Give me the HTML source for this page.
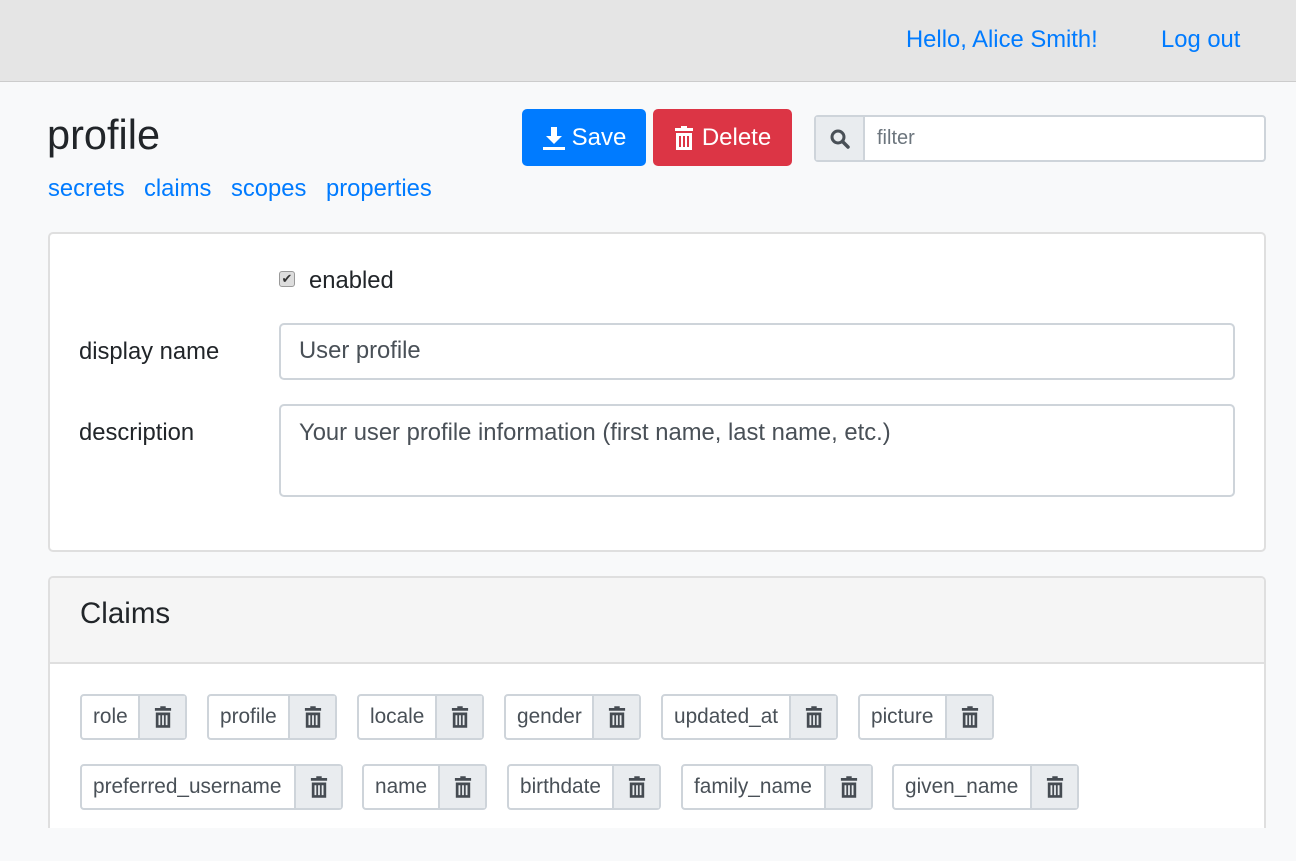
<!DOCTYPE html><html><head><style>
*{box-sizing:border-box;margin:0;padding:0}
body{width:1296px;height:861px;background:#f8f9fa;font-family:"Liberation Sans",sans-serif;position:relative;overflow:hidden;color:#212529}
.a{position:absolute}
.hdr{left:0;top:0;width:1296px;height:82px;background:#e5e5e5;border-bottom:1px solid #ccc}
.lnk{color:#007bff;font-size:23.8px}
.chip{position:absolute;height:46px;border:2px solid #ced4da;border-radius:4px;background:#fff;display:flex;font-size:20.8px;color:#495057}
.chip span{flex:1;display:flex;align-items:center;padding-left:11px}
.chip i{width:47px;background:#e9ecef;border-left:2px solid #ced4da;display:flex;align-items:center;justify-content:center}
</style></head><body>
<div class="a hdr"></div>
<div class="a lnk" style="left:906px;top:26px">Hello, Alice Smith!</div>
<div class="a lnk" style="left:1161px;top:26px">Log out</div>
<div class="a" style="left:47px;top:111px;font-size:41.5px">profile</div>
<div class="a lnk" style="left:48px;top:175px">secrets</div>
<div class="a lnk" style="left:144px;top:175px">claims</div>
<div class="a lnk" style="left:231px;top:175px">scopes</div>
<div class="a lnk" style="left:326px;top:175px">properties</div>
<div class="a" style="left:522px;top:109px;width:124px;height:57px;background:#007bff;border-radius:5px;color:#fff;font-size:24px;display:flex;align-items:center;justify-content:center;gap:6px"><svg width="24" height="24" viewBox="0 0 24 24"><path d="M9 1h6v9h5l-8 8-8-8h5z M1 21h22v3H1z" fill="#fff"/></svg>Save</div>
<div class="a" style="left:653px;top:109px;width:139px;height:57px;background:#dc3545;border-radius:5px;color:#fff;font-size:24px;display:flex;align-items:center;justify-content:center;gap:8px"><svg width="20" height="24" viewBox="0 0 20 24"><path d="M7 0h6v2h6v3H1V2h6z M2 7h16v17H2z" fill="#fff"/><path d="M6 10v11M10 10v11M14 10v11" stroke="#dc3545" stroke-width="2"/></svg>Delete</div>
<div class="a" style="left:814px;top:115px;width:452px;height:47px;border:2px solid #ced4da;border-radius:4px;background:#fff;display:flex">
<div style="width:49px;background:#e9ecef;border-right:2px solid #ced4da;display:flex;align-items:center;justify-content:center"><svg width="20" height="20" viewBox="0 0 20 20"><circle cx="8" cy="8" r="6" fill="none" stroke="#495057" stroke-width="3"/><path d="M12.5 12.5L18 18" stroke="#495057" stroke-width="3.5" stroke-linecap="round"/></svg></div>
<div style="padding-left:12px;font-size:20px;color:#6c757d;display:flex;align-items:center">filter</div></div>
<div class="a" style="left:48px;top:232px;width:1218px;height:320px;background:#fff;border:2px solid #dfdfdf;border-radius:5px"></div>
<div class="a" style="left:279px;top:271px;width:16px;height:16px;border:1px solid #999;border-radius:3px;background:#ddd;font-size:13px;line-height:14px;text-align:center;color:#333">✔</div>
<div class="a" style="left:309px;top:267px;font-size:23.8px">enabled</div>
<div class="a" style="left:79px;top:338px;font-size:23.8px">display name</div>
<div class="a" style="left:279px;top:323px;width:956px;height:57px;border:2px solid #ced4da;border-radius:5px;font-size:23.8px;color:#495057;padding:12px 18px">User profile</div>
<div class="a" style="left:79px;top:419px;font-size:23.8px">description</div>
<div class="a" style="left:279px;top:404px;width:956px;height:93px;border:2px solid #ced4da;border-radius:5px;font-size:23.8px;color:#495057;padding:13px 18px">Your user profile information (first name, last name, etc.)</div>
<div class="a" style="left:48px;top:576px;width:1218px;height:270px;background:#fff;border:2px solid #dfdfdf;border-radius:5px;overflow:hidden"><div style="height:86px;background:#f5f5f5;border-bottom:2px solid #dfdfdf;font-size:29.5px;padding:19px 30px">Claims</div></div>
<div class="a" style="left:0;top:828px;width:1296px;height:33px;background:#f8f9fa"></div>
<div id="chips"></div>
<script>
var t='<svg width="18" height="22" viewBox="0 0 20 24"><path d="M7 0h6v2h6v3H1V2h6z M2 7h16v17H2z" fill="#454b52"/><path d="M6 10v11M10 10v11M14 10v11" stroke="#e9ecef" stroke-width="2"/></svg>';
var c=[["role",80,694,107],["profile",207,694,130],["locale",357,694,127],["gender",504,694,137],["updated_at",661,694,177],["picture",858,694,136],["preferred_username",80,764,263],["name",362,764,125],["birthdate",507,764,154],["family_name",681,764,192],["given_name",892,764,187]];
var h='';c.forEach(function(x){h+='<div class="chip" style="left:'+x[1]+'px;top:'+x[2]+'px;width:'+x[3]+'px"><span>'+x[0]+'</span><i>'+t+'</i></div>'});
document.getElementById('chips').innerHTML=h;
</script>
</body></html>
